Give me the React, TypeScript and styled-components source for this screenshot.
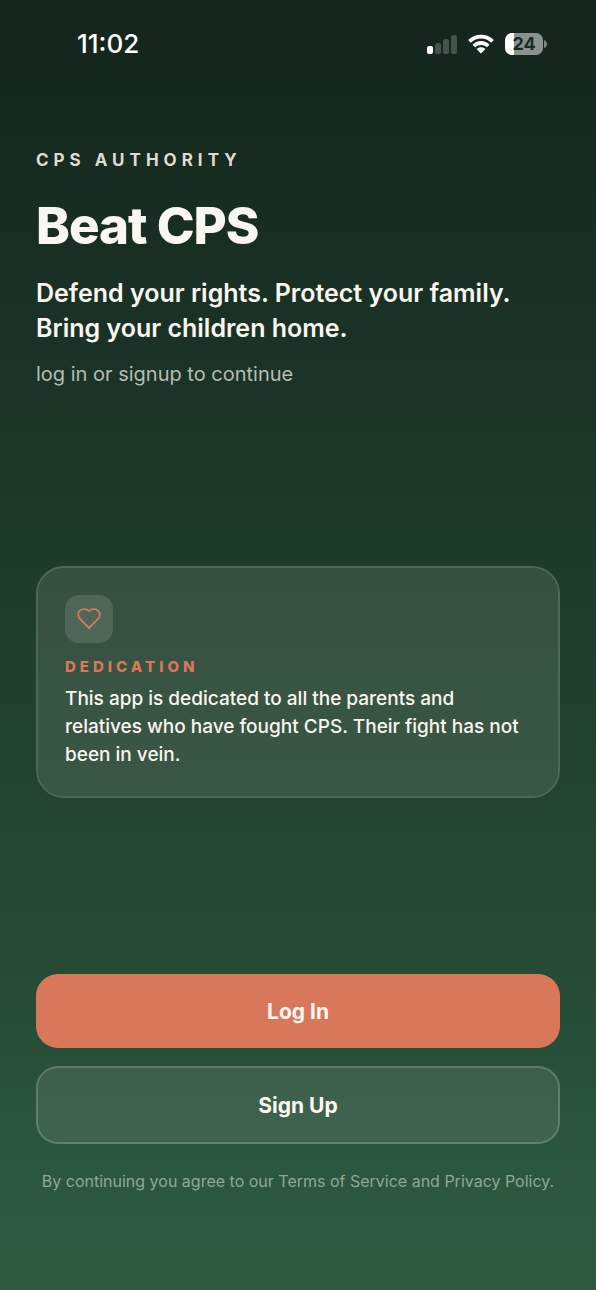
import React from "react";
import styled, { createGlobalStyle } from "styled-components";

const GlobalStyle = createGlobalStyle`
  *, *::before, *::after { box-sizing: border-box; }
  body {
    margin: 0;
    background: #2d5a41;
    font-family: Inter, "Liberation Sans", sans-serif;
    color: #faf6f0;
  }
  h1, h2, p { margin: 0; }
`;

const Screen = styled.div`
  display: flex;
  flex-direction: column;
  min-height: 100vh;
  background: linear-gradient(180deg, #14251c 0%, #1e3a2b 42%, #264b34 75%, #2b563f 90%, #2e5b40 100%);
`;

const StatusBar = styled.header`
  display: flex;
  align-items: center;
  justify-content: space-between;
  padding: 28px 49px 0 77px;
`;

const Clock = styled.time`
  font-size: 26px;
  line-height: 32px;
  font-weight: 500;
  color: #ffffff;
`;

const StatusIcons = styled.div`
  display: flex;
  align-items: center;
  gap: 11px;
`;

const Battery = styled.div`
  display: flex;
  align-items: center;
  gap: 1px;
`;

const BatteryBody = styled.div`
  display: flex;
  align-items: center;
  justify-content: center;
  width: 38px;
  height: 22px;
  border-radius: 7px;
  background: linear-gradient(90deg, #ffffff 24%, #89928d 24%);
  color: #1b2c23;
  font-size: 18px;
  line-height: 22px;
  font-weight: 700;
`;

const Content = styled.main`
  flex: 1;
  display: flex;
  flex-direction: column;
  justify-content: space-between;
  gap: 32px;
  padding: 88px 36px 95px;
`;

const Intro = styled.section`
  display: flex;
  flex-direction: column;
`;

const Label = styled.p<{ $accent?: boolean }>`
  font-size: ${(p) => (p.$accent ? 15 : 17)}px;
  line-height: 24px;
  font-weight: ${(p) => (p.$accent ? 800 : 700)};
  letter-spacing: ${(p) => (p.$accent ? 4 : 5)}px;
  color: ${(p) => (p.$accent ? "#d8785a" : "#dcdcd3")};
`;

const Title = styled.h1`
  margin-top: 24px;
  font-size: 51px;
  line-height: 60px;
  font-weight: 800;
  letter-spacing: -1px;
`;

const Tagline = styled.p`
  margin-top: 20px;
  font-size: 25px;
  line-height: 35px;
  font-weight: 600;
`;

const Hint = styled.p`
  margin-top: 12px;
  font-size: 20px;
  line-height: 32px;
  color: #b5bcb2;
`;

const Card = styled.section`
  padding: 27px;
  border: 2px solid #4a6a57;
  border-radius: 28px;
  background: rgba(250, 246, 240, 0.11);
  background-clip: padding-box;
`;

const IconTile = styled.div`
  display: flex;
  align-items: center;
  justify-content: center;
  width: 48px;
  height: 48px;
  margin-bottom: 12px;
  border-radius: 14px;
  background: rgba(255, 255, 255, 0.12);
`;

const CardText = styled.p`
  margin-top: 6px;
  font-size: 19px;
  line-height: 28px;
  font-weight: 500;
`;

const Actions = styled.section`
  display: flex;
  flex-direction: column;
  gap: 18px;
`;

const Button = styled.button<{ $outlined?: boolean }>`
  height: ${(p) => (p.$outlined ? 78 : 74)}px;
  border: ${(p) => (p.$outlined ? "2px solid rgba(255, 255, 255, 0.25)" : "0")};
  border-radius: 22px;
  background: ${(p) => (p.$outlined ? "rgba(250, 246, 240, 0.09)" : "#d9775a")};
  background-clip: padding-box;
  color: #fdf8f2;
  font-family: inherit;
  font-size: 21px;
  font-weight: 700;
  cursor: pointer;
`;

const Legal = styled.p`
  margin-top: 5px;
  font-size: 16px;
  line-height: 28px;
  text-align: center;
  color: #8fa799;
`;

const SignalIcon = () => (
  <svg width="30" height="20" viewBox="0 0 30 20" aria-hidden="true">
    <rect x="0" y="12" width="6" height="8" rx="2" fill="#fff" />
    <rect x="8" y="9" width="6" height="11" rx="2" fill="#43544b" />
    <rect x="16" y="5" width="6" height="15" rx="2" fill="#43544b" />
    <rect x="24" y="1" width="6" height="19" rx="2" fill="#43544b" />
  </svg>
);

const WifiIcon = () => (
  <svg width="26" height="20" viewBox="0 0 26 20" aria-hidden="true">
    <g fill="none" stroke="#fff" strokeWidth="3.8">
      <path d="M1.4 7.4C8 .9 18 .9 24.6 7.4" />
      <path d="M5.8 12C9.900 8 16.100 8 20.200 12" />
    </g>
    <path d="M8.600 15.100C11.200 12.700 14.800 12.700 17.400 15.100L13.600 19.100Q13 19.700 12.400 19.100Z" fill="#fff" />
  </svg>
);

const HeartIcon = () => (
  <svg width="24" height="24" viewBox="0 0 24 24" fill="none" stroke="#d8785a" strokeWidth="1.8" strokeLinecap="round" strokeLinejoin="round" aria-hidden="true">
    <path d="M12 21L3.700 12.700C.500 9.500.500 6 2.600 3.900C5.200 1.500 9.600 1.700 12 4.200C14.400 1.700 18.800 1.500 21.400 3.900C23.500 6 23.500 9.500 20.300 12.700Z" />
  </svg>
);

export default function App() {
  return (
    <>
      <GlobalStyle />
      <Screen>
        <StatusBar>
          <Clock>11:02</Clock>
          <StatusIcons>
            <SignalIcon />
            <WifiIcon />
            <Battery>
              <BatteryBody>24</BatteryBody>
              <svg width="3" height="8" viewBox="0 0 3 8" aria-hidden="true">
                <path d="M0 0Q3 1 3 4T0 8Z" fill="#7b8580" />
              </svg>
            </Battery>
          </StatusIcons>
        </StatusBar>
        <Content>
          <Intro>
            <Label>CPS AUTHORITY</Label>
            <Title>Beat CPS</Title>
            <Tagline>
              Defend your rights. Protect your family.
              <br />
              Bring your children home.
            </Tagline>
            <Hint>log in or signup to continue</Hint>
          </Intro>
          <Card>
            <IconTile>
              <HeartIcon />
            </IconTile>
            <Label as="h2" $accent>DEDICATION</Label>
            <CardText>
              This app is dedicated to all the parents and relatives who have fought CPS. Their fight has not been in vein.
            </CardText>
          </Card>
          <Actions>
            <Button type="button">Log In</Button>
            <Button type="button" $outlined>Sign Up</Button>
            <Legal>By continuing you agree to our Terms of Service and Privacy Policy.</Legal>
          </Actions>
        </Content>
      </Screen>
    </>
  );
}
